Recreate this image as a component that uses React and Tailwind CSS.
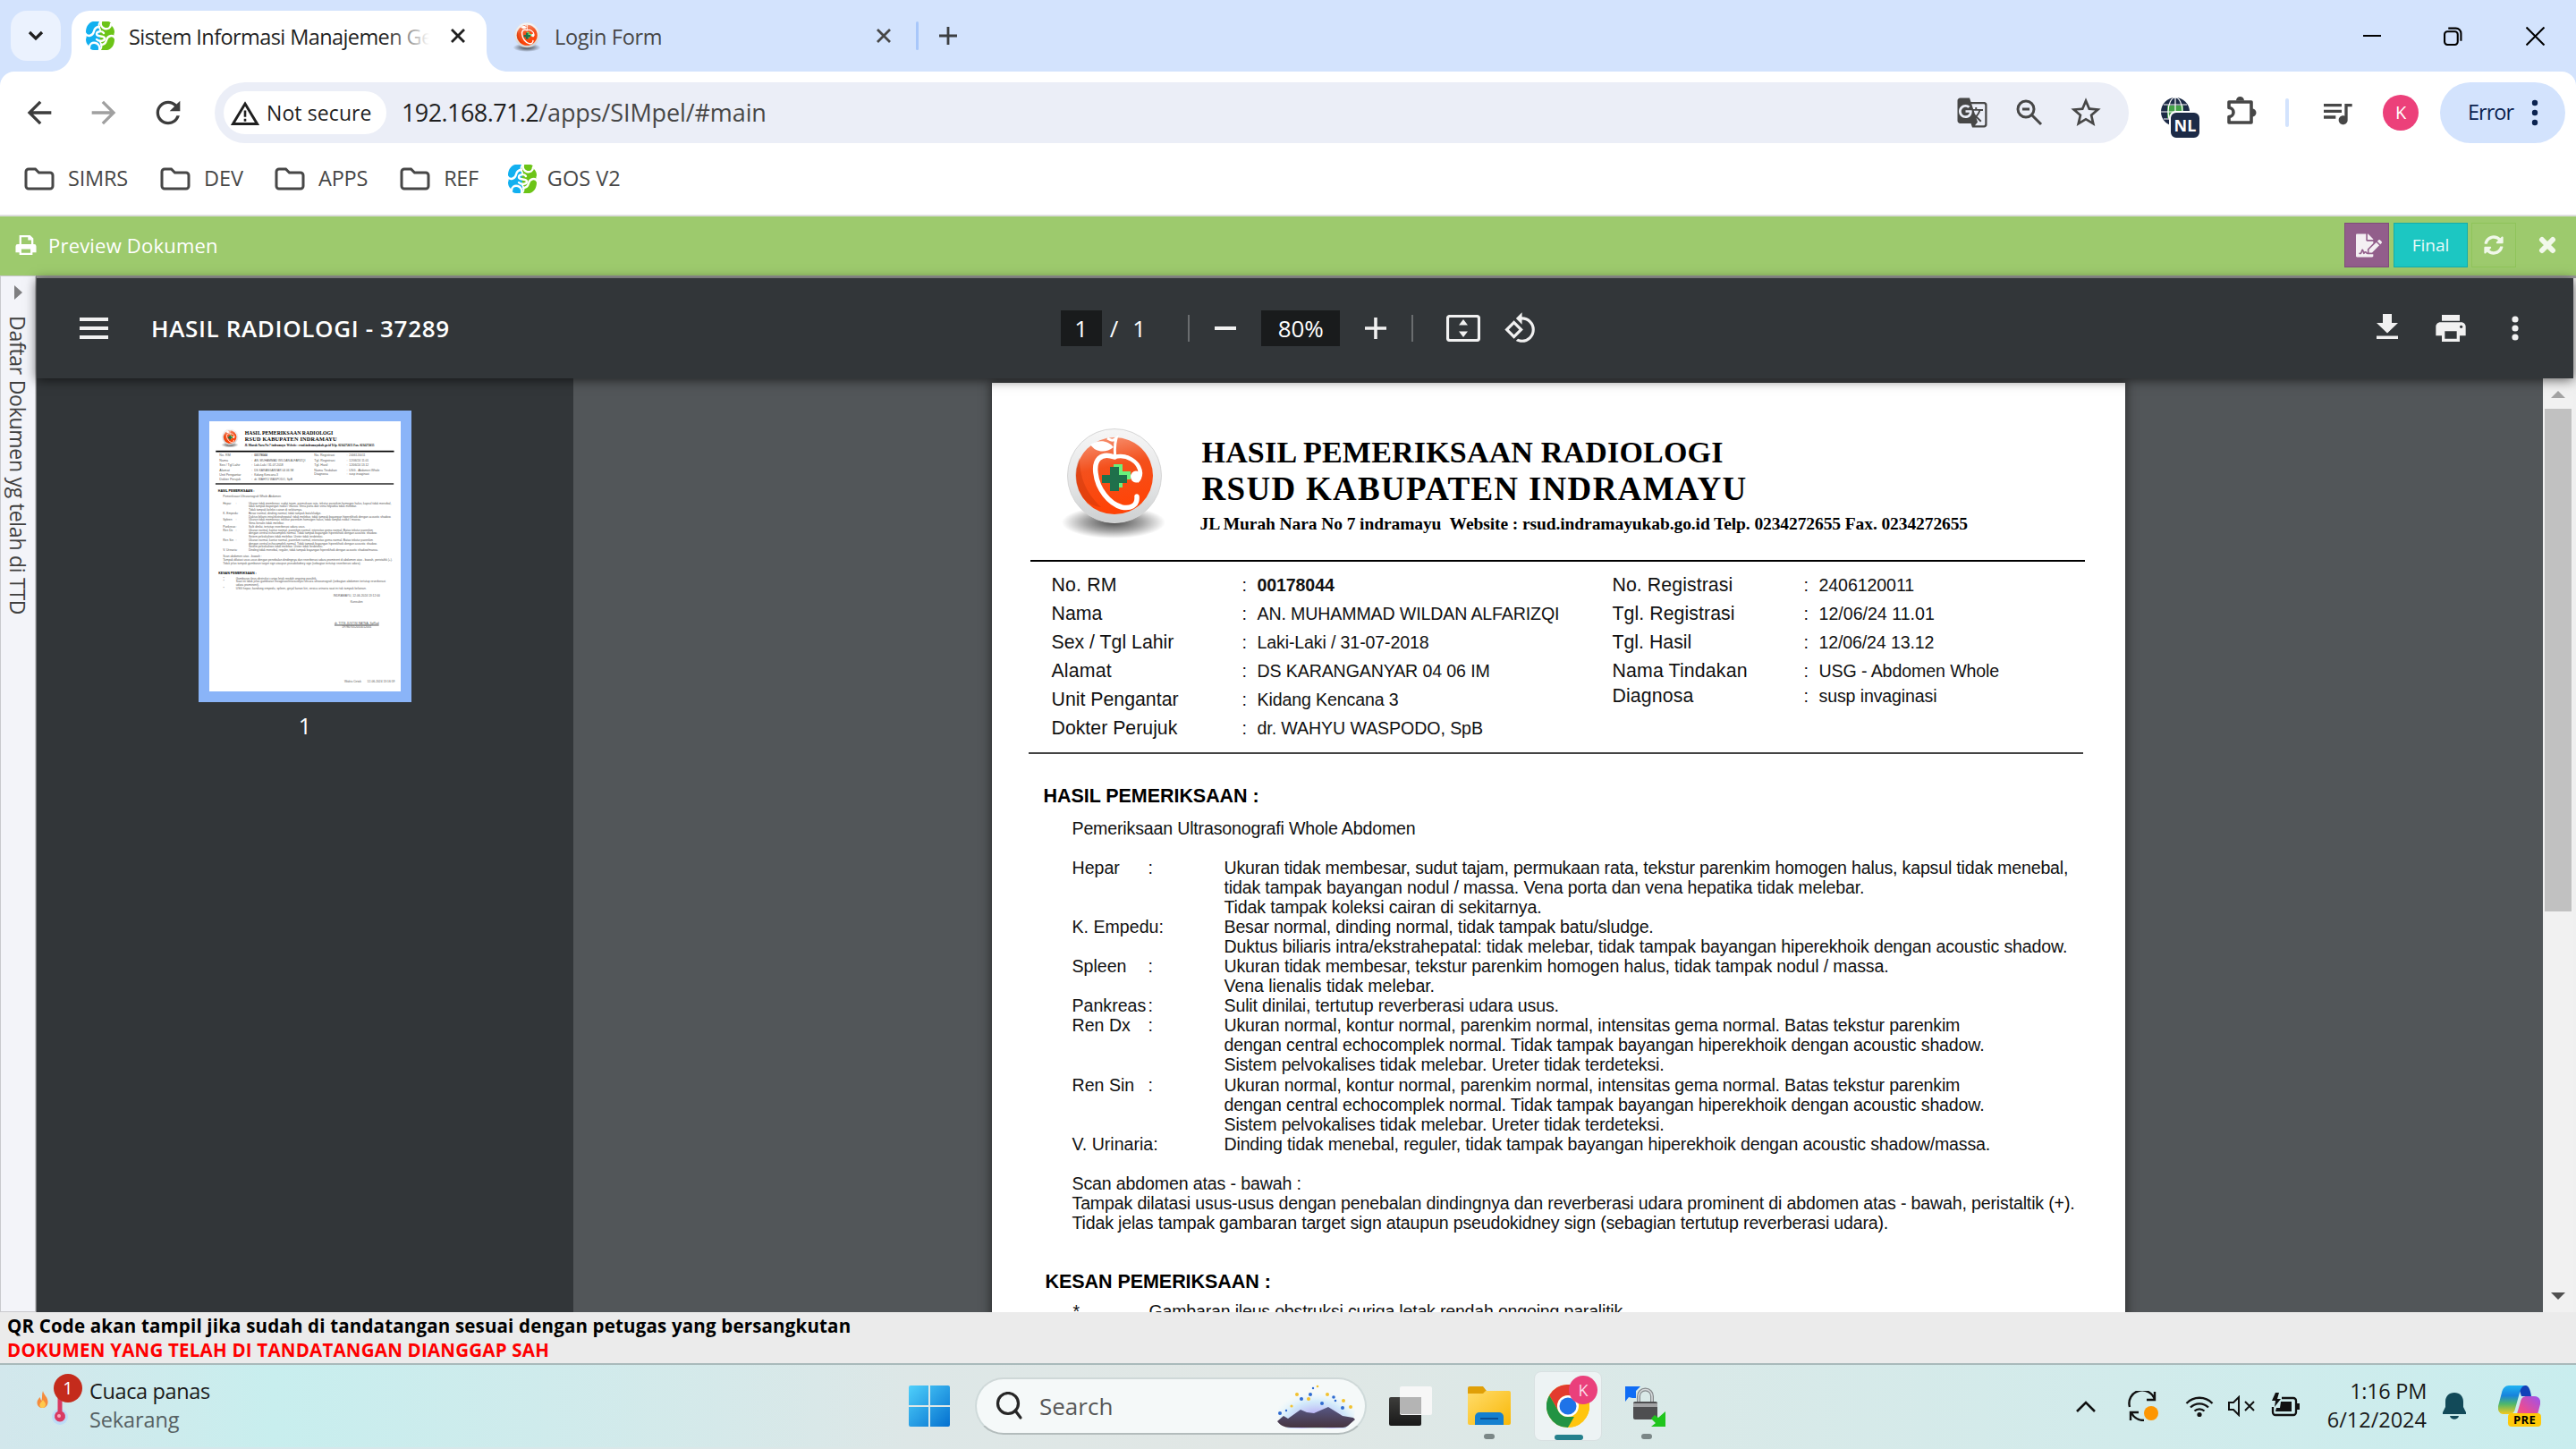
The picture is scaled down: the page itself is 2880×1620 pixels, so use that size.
import React, { useLayoutEffect, useRef, useState } from "react";
import {
  MdArrowBack,
  MdArrowForward,
  MdRefresh,
  MdGTranslate,
  MdStarBorder,
  MdQueueMusic,
  MdPrint,
  MdRotate90DegreesCcw,
} from "react-icons/md";
import { FaFileSignature, FaSyncAlt } from "react-icons/fa";

/* One line of text whose tracking is adjusted until it is `w` pixels long. */
function Fit({ w, vertical, className = "", children }) {
  const ref = useRef(null);
  const [spacing, setSpacing] = useState(0);
  useLayoutEffect(() => {
    const el = ref.current;
    const natural = vertical ? el.offsetHeight : el.offsetWidth;
    setSpacing((w - natural) / String(children).length);
  }, []);
  return (
    <span
      ref={ref}
      className={"inline-block shrink-0 whitespace-pre " + className}
      style={{ letterSpacing: spacing + "px" }}
    >
      {children}
    </span>
  );
}

function GosLogo({ className = "" }) {
  return (
    <svg viewBox="0 0 32 32" className={"size-8 shrink-0 " + className}>
      <path d="M8 0h7c-2 3-2 6 0 9l2 7-2 7c2 3 2 6 0 9H9c-3 0-5-2-6-5-2-2-3-4-3-7 1-3 1-5 0-8 0-6 3-11 8-12z" fill="#12b0f0" />
      <path d="M17 0h7c3 0 5 2 5 5 2 2 3 4 3 7-1 3-1 5 0 8 0 6-3 11-8 12h-7c2-3 2-6 0-9l-2-7 2-7c-2-3-2-6 0-9z" fill="#6cc417" />
      <g fill="none" stroke="#fff" strokeWidth="2.4" strokeLinecap="round">
        <path d="M-1 13c3 5 9 3 10-2 1-4 3-5 6-5" />
        <path d="M4 29c0-4 3-6 7-5 3 1 5 4 4 8" />
        <path d="M33 19c-3-5-9-3-10 2-1 4-3 5-6 5" />
        <path d="M28 3c0 4-3 6-7 5-3-1-5-4-4-8" />
        <path d="M20 13c-2-3-8-2-8 1 0 4 9 1 9 5 0 3-6 4-9 1" />
      </g>
    </svg>
  );
}

function HospitalLogo({ id, className = "" }) {
  return (
    <svg viewBox="0 0 120 132" className={"shrink-0 " + className}>
      <defs>
        <linearGradient id={id + "rim"} x1="0" y1="0" x2="0" y2="1">
          <stop offset="0" stopColor="#f6f6f6" />
          <stop offset=".6" stopColor="#e3e4e5" />
          <stop offset="1" stopColor="#cdd0d1" />
        </linearGradient>
        <linearGradient id={id + "red"} x1="0" y1="0" x2="0.2" y2="1">
          <stop offset="0" stopColor="#f79a7c" />
          <stop offset=".3" stopColor="#f4683c" />
          <stop offset=".45" stopColor="#f4501c" />
          <stop offset="1" stopColor="#ff4306" />
        </linearGradient>
        <radialGradient id={id + "sh"}>
          <stop offset="0" stopColor="#000" stopOpacity=".7" />
          <stop offset=".55" stopColor="#000" stopOpacity=".35" />
          <stop offset="1" stopColor="#000" stopOpacity="0" />
        </radialGradient>
      </defs>
      <ellipse cx="60" cy="106" rx="58" ry="18" fill={`url(#${id}sh)`} />
      <circle cx="61" cy="54" r="52.5" fill={`url(#${id}rim)`} stroke="#d6d6d6" strokeWidth="1" />
      <circle cx="61" cy="54" r="43" fill={`url(#${id}red)`} />
      <path d="M27 80a43 43 0 0 1-5-46c0 20 6 38 24 55-8-1-14-4-19-9z" fill="#b93209" opacity=".35" />
      <path d="M34 19c9-6 20-5 26 3-9 7-20 6-26-3z" fill="#fff" />
      <path d="M53 12c5 3 6 3 10 0-2 7-2 14-1 22" fill="none" stroke="#fff" strokeWidth="3" />
      <path
        d="M61 33C45 27 38 37 40 51c2 18 15 34 29 38 9 2 18-1 17-12"
        fill="none"
        stroke="#fff"
        strokeWidth="5.5"
        strokeLinecap="round"
      />
      <path d="M61 33c13-4 28 5 29 18 0 4-2 8-4 9" fill="none" stroke="#fff" strokeWidth="4.5" />
      <ellipse cx="85" cy="55" rx="6" ry="6.5" fill="#fff" />
      <path d="M60 41h10v8h9v9h-9v9h-10z" fill="#6af07c" />
      <path d="M56 44h10v9h9v9h-9v9H56v-9h-9v-9h9z" fill="#1f704b" />
    </svg>
  );
}

function CloseIcon({ className = "" }) {
  return (
    <svg viewBox="0 0 16 16" className={"size-4 shrink-0 " + className}>
      <path d="M1 1l14 14M15 1L1 15" stroke="currentColor" strokeWidth="2.8" />
    </svg>
  );
}

function TabStrip() {
  return (
    <div className="flex h-20 shrink-0 bg-[#d3e3fd] pl-3 text-[23.5px]">
      <div className="mt-3 flex size-14 items-center justify-center rounded-[18px] bg-[#ebf2fe]">
        <svg viewBox="0 0 18 12" className="h-3 w-[18px]">
          <path d="M2 2l7 7 7-7" fill="none" stroke="#1f1f1f" strokeWidth="3.2" />
        </svg>
      </div>
      <div className="relative mt-3 ml-3 h-[68px] w-[464px] rounded-t-[20px] bg-white">
        <svg viewBox="0 0 24 24" className="absolute bottom-0 -left-6 size-6">
          <path d="M24 0v24H0C14 24 24 14 24 0z" fill="#fff" />
        </svg>
        <svg viewBox="0 0 24 24" className="absolute -right-6 bottom-0 size-6">
          <path d="M0 0v24h24C10 24 0 14 0 0z" fill="#fff" />
        </svg>
        <div className="flex h-14 items-center pl-4 text-[#1f1f1f]">
          <GosLogo />
          <div className="relative ml-4 w-[336px] overflow-hidden pt-[3px]">
            <Fit w={340}>Sistem Informasi Manajemen Ge</Fit>
            <div className="absolute inset-y-0 right-0 w-12 bg-linear-to-r from-transparent to-white" />
          </div>
          <CloseIcon className="ml-6" />
        </div>
      </div>
      <div className="mt-3 flex h-14 items-center pl-[29px] text-[#474747]">
        <HospitalLogo id="tab" className="-mb-1 h-[37px] w-[32px]" />
        <Fit w={120} className="ml-[15px] pt-[3px]">Login Form</Fit>
        <CloseIcon className="ml-[240px]" />
        <div className="ml-7 h-8 w-[3px] rounded-full bg-[#a8c7fa]" />
        <svg viewBox="0 0 20 20" className="ml-[23px] size-5">
          <path d="M10 0v20M0 10h20" stroke="#3c3f42" strokeWidth="2.8" />
        </svg>
      </div>
      <div className="mr-[35px] ml-auto flex h-20 items-center">
        <svg viewBox="0 0 20 20" className="size-5"><path d="M0 10h20" stroke="#000" strokeWidth="2" /></svg>
        <svg viewBox="0 0 20 20" className="ml-[70px] size-[21px]" fill="none" stroke="#000" strokeWidth="2">
          <rect x="1" y="5" width="14" height="14" rx="3" />
          <path d="M5 1.5h8a5.5 5.5 0 0 1 5.5 5.5v8" />
        </svg>
        <svg viewBox="0 0 20 20" className="ml-[71px] size-[21px]">
          <path d="M.5.5l19 19M19.5.5l-19 19" stroke="#000" strokeWidth="2" />
        </svg>
      </div>
    </div>
  );
}

function AddressBar() {
  return (
    <div className="flex h-[92px] items-center pl-6 text-[#474747]">
      <MdArrowBack className="size-10 text-[#3c3c3c]" />
      <MdArrowForward className="ml-8 size-10 text-[#a0a0a0]" />
      <MdRefresh className="ml-8 size-10 text-[#3c3c3c]" />
      <div className="ml-8 flex h-[68px] w-[2140px] items-center rounded-full bg-[#ebeef7] pl-2.5">
        <div className="flex h-12 w-[182px] items-center rounded-full bg-white pl-2 text-[#1f1f1f]">
          <svg viewBox="0 0 30 26" className="h-[27px] w-8">
            <path d="M15 3L28 24.5H2z" fill="none" stroke="#1f1f1f" strokeWidth="2.8" />
            <path d="M15 10v7M15 19v3" stroke="#1f1f1f" strokeWidth="2.5" />
          </svg>
          <Fit w={118} className="ml-2 text-[23px] font-medium">Not secure</Fit>
        </div>
        <span className="ml-[17px] flex items-start text-[27px]">
          <Fit w={153} className="text-[#1f1f1f]">192.168.71.2</Fit>
          <Fit w={255}>/apps/SIMpel/#main</Fit>
        </span>
        <MdGTranslate className="ml-auto size-9" />
        <svg viewBox="0 0 30 30" className="ml-[31px] size-[30px]" fill="none" stroke="currentColor" strokeWidth="3">
          <circle cx="11" cy="11" r="9" />
          <path d="M7 11h8M17.5 17.5L28 28" />
        </svg>
        <MdStarBorder className="mr-7 ml-7 size-10" />
      </div>
      <div className="relative ml-[34px] size-9">
        <svg viewBox="0 0 36 36" className="-mt-px size-9">
          <circle cx="18" cy="18" r="16" fill="#1d2b47" />
          <path d="M9 11h18v14H9z" fill="#43a047" />
          <g fill="none" stroke="#fff" strokeWidth="1.2">
            <ellipse cx="18" cy="18" rx="8" ry="16" />
            <path d="M18 2v32M2 18h32M5 10h26M5 26h26" />
          </g>
        </svg>
        <div className="absolute top-4 left-[11px] flex h-[32px] w-[36px] items-center justify-center rounded-lg border-2 border-white bg-[#1d2b47] text-[18px] font-bold text-white">
          NL
        </div>
      </div>
      <svg viewBox="0 0 36 36" className="ml-[38px] size-9 -translate-y-0.5">
        <path
          d="M4 8h25v23H4v-6.5a5 5 0 0 0 0-10z"
          fill="none"
          stroke="currentColor"
          strokeWidth="3.6"
          strokeLinejoin="round"
        />
        <path d="M12 6.5a4.5 4.5 0 0 1 9 0zM30 15.5a4.5 4.5 0 0 1 0 9z" fill="currentColor" />
      </svg>
      <div className="ml-[31px] h-8 w-1 rounded-full bg-[#d3e3fd]" />
      <MdQueueMusic className="ml-[34px] size-10" />
      <div className="ml-[31px] flex size-10 items-center justify-center rounded-full bg-[#ec407a] text-[20px] text-white">K</div>
      <div className="ml-6 flex h-[68px] w-[140px] items-center rounded-full bg-[#d3e3fd] pl-[31px] text-[23.5px] text-[#0b2350]">
        <Fit w={51}>Error</Fit>
        <svg viewBox="0 0 8 30" className="ml-[20px] h-[30px] w-2" fill="#0b2350">
          <circle cx="4" cy="4" r="3.2" />
          <circle cx="4" cy="15" r="3.2" />
          <circle cx="4" cy="26" r="3.2" />
        </svg>
      </div>
    </div>
  );
}

const BOOKMARKS = [
  { label: "SIMRS", w: 67, ml: "" },
  { label: "DEV", w: 44, ml: "ml-9" },
  { label: "APPS", w: 55, ml: "ml-[35px]" },
  { label: "REF", w: 39, ml: "ml-[36px]" },
];

function Bookmarks() {
  return (
    <div className="flex h-[56px] items-center pl-[27px] text-[23.5px] text-[#474747]">
      {BOOKMARKS.map((b) => (
        <div key={b.label} className={"flex items-center " + b.ml}>
          <svg viewBox="0 0 34 26" className="mr-[15px] h-[26px] w-[34px]">
            <path
              d="M2 5a3 3 0 0 1 3-3h7.5l4 4H29a3 3 0 0 1 3 3v12a3 3 0 0 1-3 3H5a3 3 0 0 1-3-3z"
              fill="none"
              stroke="currentColor"
              strokeWidth="3"
            />
          </svg>
          <Fit w={b.w}>{b.label}</Fit>
        </div>
      ))}
      <GosLogo className="ml-[33px]" />
      <Fit w={82} className="ml-3">GOS V2</Fit>
    </div>
  );
}

function PreviewHeader() {
  return (
    <div className="flex h-[66px] shrink-0 items-center bg-[#9dca6d] pb-0.5 pl-[16px] text-white">
      <svg viewBox="0 0 26 26" className="mr-[12px] h-[24px] w-[26px]">
        <path
          fillRule="evenodd"
          d="M5 1h13l4 4v7h1a2.5 2.5 0 0 1 2.5 2.5V22H21v3H5v-3H.5v-7.5A2.5 2.5 0 0 1 3 12h2zM7.5 3.500V12h12V7h-4V3.500zM7.500 18v4.500h11V18z"
          fill="#fff"
        />
      </svg>
      <Fit w={190} className="text-[22px]">Preview Dokumen</Fit>
      <div className="ml-auto flex h-[50px] w-[50px] items-center justify-center border border-[#7f4d7a] bg-[#925e8b]">
        <FaFileSignature className="ml-1 size-[29px] text-[#f4eff3]" />
      </div>
      <div className="ml-[5px] flex h-[50px] w-[83px] items-center justify-center border border-[#15aba9] bg-[#1cc7c2]">
        <Fit w={42} className="text-[19px] text-[#e8faf9]">Final</Fit>
      </div>
      <div className="ml-1 flex size-[50px] items-center justify-center border border-[#8fc45a]">
        <FaSyncAlt className="size-[22px] text-[#f1f8ea]" />
      </div>
      <svg viewBox="0 0 20 20" className="mr-[22px] ml-[25px] size-5">
        <path d="M4 4l12 12M16 4L4 16" stroke="#f1f8ea" strokeWidth="6" strokeLinecap="round" />
      </svg>
    </div>
  );
}

function SideStrip() {
  return (
    <div className="flex w-10 shrink-0 flex-col items-center border border-[#c9c9cd] bg-[#f3f4f9]">
      <svg viewBox="0 0 9 16" className="mt-[10px] h-4 w-[9px]">
        <path d="M0 0l9 8-9 8z" fill="#7e7e80" />
      </svg>
      <Fit vertical w={334} className="mt-[18px] text-[23px] leading-[36px] text-[#404040] [writing-mode:vertical-rl]">
        Daftar Dokumen yg telah di TTD
      </Fit>
    </div>
  );
}

function PdfToolbar() {
  return (
    <div className="relative z-10 flex h-28 shrink-0 items-center bg-[#323639] pl-12 text-[26px] text-white shadow-[0_2px_12px_rgba(0,0,0,0.6)]">
      <div className="flex w-8 flex-col gap-[6px]">
        <div className="h-1 bg-[#f1f1f1]" />
        <div className="h-1 bg-[#f1f1f1]" />
        <div className="h-1 bg-[#f1f1f1]" />
      </div>
      <Fit w={334} className="ml-12 font-semibold">HASIL RADIOLOGI - 37289</Fit>
      <div className="ml-[683px] flex h-10 w-[46px] items-center justify-center bg-[#191b1c]">1</div>
      <span className="ml-[9px]">/</span>
      <span className="ml-[16px] w-[16px]">1</span>
      <div className="ml-[46px] h-[30px] w-0.5 bg-[#6a6d6f]" />
      <div className="ml-7 h-[4px] w-6 bg-[#f1f1f1]" />
      <div className="ml-7 flex h-10 w-[88px] items-center justify-center bg-[#191b1c]">
        <Fit w={51}>80%</Fit>
      </div>
      <svg viewBox="0 0 24 24" className="ml-7 size-6">
        <path d="M12 0v24M0 12h24" stroke="#f1f1f1" strokeWidth="3.6" />
      </svg>
      <div className="ml-7 h-[30px] w-0.5 bg-[#6a6d6f]" />
      <svg viewBox="0 0 38 30" className="ml-[37px] h-[30px] w-[38px]">
        <rect x="1.5" y="1.5" width="35" height="27" rx="2.5" fill="none" stroke="#f1f1f1" strokeWidth="3.2" />
        <path d="M19 5l5 6.5H14zM19 25l5-6.500H14z" fill="#f1f1f1" />
      </svg>
      <MdRotate90DegreesCcw className="ml-[26px] size-[38px] text-[#f1f1f1]" />
      <svg viewBox="0 0 24 28" className="ml-auto -mt-1 h-[28px] w-6" fill="#f1f1f1">
        <path d="M7 0h10v10h7L12 21.5 0 10h7zM0 24.500h24V28H0z" />
      </svg>
      <MdPrint className="ml-[39px] size-[40px] text-[#f1f1f1]" />
      <svg viewBox="0 0 8 28" className="mr-[61px] ml-[48px] h-[28px] w-2" fill="#f1f1f1">
        <circle cx="4" cy="4" r="3.6" />
        <circle cx="4" cy="14" r="3.6" />
        <circle cx="4" cy="24" r="3.6" />
      </svg>
    </div>
  );
}

const LEFT_INFO = [
  ["No. RM", 73, "00178044", 86],
  ["Nama", 57, "AN. MUHAMMAD WILDAN ALFARIZQI", 338],
  ["Sex / Tgl Lahir", 137, "Laki-Laki / 31-07-2018", 192],
  ["Alamat", 67, "DS KARANGANYAR 04 06 IM", 260],
  ["Unit Pengantar", 142, "Kidang Kencana 3", 158],
  ["Dokter Perujuk", 141, "dr. WAHYU WASPODO, SpB", 252],
];

const RIGHT_INFO = [
  ["No. Registrasi", 135, "2406120011", 107],
  ["Tgl. Registrasi", 137, "12/06/24 11.01", 129],
  ["Tgl. Hasil", 89, "12/06/24 13.12", 129],
  ["Nama Tindakan", 151, "USG - Abdomen Whole", 202],
  ["Diagnosa", 91, "susp invaginasi", 132],
];

const ECHO = [
  ["Ukuran normal, kontur normal, parenkim normal, intensitas gema normal. Batas tekstur parenkim", 823],
  ["dengan central echocomplek normal. Tidak tampak bayangan hiperekhoik dengan acoustic shadow.", 850],
  ["Sistem pelvokalises tidak melebar. Ureter tidak terdeteksi.", 492],
];

const FINDINGS = [
  ["Hepar", ":", [
    ["Ukuran tidak membesar, sudut tajam, permukaan rata, tekstur parenkim homogen halus, kapsul tidak menebal,", 944],
    ["tidak tampak bayangan nodul / massa. Vena porta dan vena hepatika tidak melebar.", 716],
    ["Tidak tampak koleksi cairan di sekitarnya.", 355],
  ]],
  ["K. Empedu:", "", [
    ["Besar normal, dinding normal, tidak tampak batu/sludge.", 480],
    ["Duktus biliaris intra/ekstrahepatal: tidak melebar, tidak tampak bayangan hiperekhoik dengan acoustic shadow.", 943],
  ]],
  ["Spleen", ":", [
    ["Ukuran tidak membesar, tekstur parenkim homogen halus, tidak tampak nodul / massa.", 743],
    ["Vena lienalis tidak melebar.", 235],
  ]],
  ["Pankreas", ":", [["Sulit dinilai, tertutup reverberasi udara usus.", 374]]],
  ["Ren Dx", ":", ECHO],
  ["Ren Sin", ":", ECHO],
  ["V. Urinaria:", "", [
    ["Dinding tidak menebal, reguler, tidak tampak bayangan hiperekhoik dengan acoustic shadow/massa.", 857],
  ]],
];

function InfoRow({ row, tight, wide, bold }) {
  return (
    <div className={"flex items-center " + (tight ? "h-6" : "h-8")}>
      <div className={"shrink-0 text-[21.3px] " + (wide ? "w-[214px]" : "w-[213px]")}>
        <Fit w={row[1]}>{row[0]}</Fit>
      </div>
      <span className="w-[17px] shrink-0">:</span>
      <Fit w={row[3]} className={bold ? "font-bold" : ""}>{row[2]}</Fit>
    </div>
  );
}

function Report({ id, thumb }) {
  return (
    <div
      className={
        "flex h-[1787px] w-[1267px] shrink-0 flex-col bg-white font-['Liberation_Sans',Arial,sans-serif] text-[19.6px] " +
        (thumb ? "text-[#555]" : "text-[#111]")
      }
    >
      <div className="flex h-[198px] pt-[50px] pl-[76px] font-['Liberation_Serif','Times_New_Roman',serif] font-bold text-black">
        <HospitalLogo id={id} className="h-[132px] w-[120px]" />
        <div className="flex flex-col items-start pt-[7px] pl-[37px]">
          <Fit w={583} className="ml-[2px] h-[42px] text-[34px] leading-[42px]">HASIL PEMERIKSAAN RADIOLOGI</Fit>
          <Fit w={610} className="ml-[2px] h-10 text-[37px] leading-[40px]">RSUD KABUPATEN INDRAMAYU</Fit>
          <Fit w={859} className="h-[38px] text-[19.5px] leading-[38px]">
            {"JL Murah Nara No 7 indramayu  Website : rsud.indramayukab.go.id Telp. 0234272655 Fax. 0234272655"}
          </Fit>
        </div>
      </div>
      <div className={"ml-[43px] w-[1179px] shrink-0 bg-black " + (thumb ? "-my-1 h-2.5" : "h-0.5")} />
      <div className="mt-[11px] flex h-48 shrink-0 pl-[67px]">
        <div className="w-[627px]">
          {LEFT_INFO.map((r, i) => (
            <InfoRow key={r[0]} row={r} bold={i === 0} />
          ))}
        </div>
        <div>
          {RIGHT_INFO.map((r, i) => (
            <InfoRow key={r[0]} row={r} tight={i === 4} wide />
          ))}
        </div>
      </div>
      <div className={"ml-[41px] w-[1179px] shrink-0 bg-[#444] " + (thumb ? "mt-1.5 -mb-1 h-2.5" : "mt-[10px] h-0.5")} />
      <Fit w={241} className="mt-[33px] ml-[58px] h-7 self-start text-[21.5px] leading-[28px] font-bold text-black">HASIL PEMERIKSAAN :</Fit>
      <div className="mt-[11px] pl-[90px] leading-[22.06px]">
        <div className="mb-[22px] h-[22px]"><Fit w={384}>Pemeriksaan Ultrasonografi Whole Abdomen</Fit></div>
        {FINDINGS.map(([label, colon, lines]) => (
          <div key={label} className="flex">
            <div className="relative w-[170px] shrink-0">
              {label}
              <span className="absolute left-[85px]">{colon}</span>
            </div>
            <div className="flex flex-col">
              {lines.map(([t, w]) => (
                <Fit key={t} w={w} className="h-[22.06px] self-start">{t}</Fit>
              ))}
            </div>
          </div>
        ))}
        <div className="mt-[22px] flex flex-col items-start">
          <Fit w={256}>Scan abdomen atas - bawah :</Fit>
          <Fit w={1121}>Tampak dilatasi usus-usus dengan penebalan dindingnya dan reverberasi udara prominent di abdomen atas - bawah, peristaltik (+).</Fit>
          <Fit w={913}>Tidak jelas tampak gambaran target sign ataupun pseudokidney sign (sebagian tertutup reverberasi udara).</Fit>
        </div>
      </div>
      <Fit w={252} className="mt-[41px] ml-[60px] h-7 self-start text-[21.5px] leading-[28px] font-bold text-black">KESAN PEMERIKSAAN :</Fit>
      <div className="mt-[8px] grid grid-cols-[85px_1fr] pr-24 pl-[91px] leading-[22px]">
        <span>*</span>
        <Fit w={535} className="justify-self-start">Gambaran ileus obstruksi curiga letak rendah ongoing paralitik.</Fit>
        <span>*</span>
        <span>Saat ini tidak jelas gambaran invaginasi/intususepsi secara ultrasonografi (sebagian abdomen tertutup reverberasi udara prominent).</span>
        <span>*</span>
        <span>USG hepar, kandung empedu, spleen, ginjal kanan kiri, vesica urinaria saat ini tak tampak kelainan.</span>
      </div>
      <div className="mt-[28px] mr-[137px] flex w-[310px] flex-col items-center self-end leading-[22px]">
        <span>INDRAMAYU, 12-06-2024 13:12:00</span>
        <span className="mt-5">Konsulen</span>
        <span className="mt-[118px] border-b-4 border-black">dr. TITIS JUSTISI RATNA, SpRad</span>
        <span>197807052010012001</span>
      </div>
      <div className="mt-auto mb-[54px] flex gap-10 self-end pr-10 leading-[22px]">
        <span>Waktu Cetak</span>
        <span>12-06-2024 13:16:59</span>
      </div>
    </div>
  );
}

function PdfViewer() {
  return (
    <div className="flex w-[2836px] shrink-0 flex-col">
      <PdfToolbar />
      <div className="flex min-h-0 flex-1">
        <div className="flex w-[600px] shrink-0 flex-col items-center bg-[#323639] pt-9">
          <div className="flex h-[326px] w-[238px] items-center justify-center bg-[#8ab4f8]">
            <div className="h-[302px] w-[214px] overflow-hidden bg-white">
              <div className="origin-top-left scale-[0.169]"><Report id="thumb" thumb /></div>
            </div>
          </div>
          <span className="mt-2 text-[25px] leading-[36px] text-white">1</span>
        </div>
        <div className="flex min-w-0 flex-1 items-start justify-center overflow-hidden bg-[#525659] pt-[5px]">
          <div className="shadow-[0_0_10px_2px_rgba(35,35,35,0.75)]"><Report id="page" /></div>
        </div>
        <div className="flex w-[34px] shrink-0 flex-col items-center bg-[#f1f1f1]">
          <svg viewBox="0 0 16 8" className="mt-[14px] h-2 w-4"><path d="M0 8l8-8 8 8z" fill="#a3a3a3" /></svg>
          <div className="mt-3 h-[562px] w-[30px] bg-[#c1c1c1]" />
          <svg viewBox="0 0 16 8" className="mt-auto mb-[14px] h-2 w-4"><path d="M0 0l8 8 8-8z" fill="#505050" /></svg>
        </div>
      </div>
    </div>
  );
}

function SearchArt() {
  return (
    <svg viewBox="0 0 90 50" className="h-[50px] w-[90px]">
      <defs>
        <radialGradient id="glow" cx=".5" cy=".75" r=".6">
          <stop offset="0" stopColor="#c6e9c9" />
          <stop offset=".35" stopColor="#bcb6f5" />
          <stop offset=".7" stopColor="#c9e6fb" stopOpacity=".8" />
          <stop offset="1" stopColor="#e8f8fd" stopOpacity="0" />
        </radialGradient>
        <linearGradient id="mount" x1="0" y1="0" x2="0" y2="1">
          <stop offset="0" stopColor="#565784" />
          <stop offset="1" stopColor="#46343f" />
        </linearGradient>
      </defs>
      <ellipse cx="46" cy="30" rx="43" ry="30" fill="url(#glow)" />
      <path d="M2 42l7-6 5 3 14-10 7 3 8 1 16-7 16 10 12 2 2 2-8 7c-3 2-5 2-8 2H17c-8 0-12-3-15-7z" fill="url(#mount)" />
      <g fill="#f2c230">
        <circle cx="24" cy="12" r="2" /><circle cx="37" cy="17" r="2" /><circle cx="47" cy="3" r="1.3" />
        <circle cx="58" cy="12" r="2" /><circle cx="76" cy="19" r="2" /><circle cx="84" cy="26" r="2" /><circle cx="18" cy="25" r="1.6" />
      </g>
      <g fill="#2f6bd0">
        <circle cx="39" cy="12" r="2" /><circle cx="29" cy="17" r="2" /><circle cx="52" cy="22" r="2" />
        <circle cx="65" cy="15" r="1.8" /><circle cx="75" cy="27" r="2" /><circle cx="5" cy="33" r="2" /><circle cx="12" cy="30" r="1.2" />
        <circle cx="42" cy="5" r="1.2" /><circle cx="67" cy="19" r="1.3" />
      </g>
    </svg>
  );
}

function Taskbar() {
  return (
    <div className="flex h-24 shrink-0 items-center border-t-2 border-[#a9babb] bg-linear-to-r from-[#d2e7ec] via-[#e1e7e5] via-48% to-[#c9edee] pb-0.5 text-[23.5px] text-[#1a1a1a]">
      <div className="flex h-full w-[1016px] items-center bg-linear-to-r from-transparent via-[#c8eeee] via-30% to-transparent pb-0.5 pl-[40px]">
        <div className="relative h-16 w-[60px] shrink-0">
          <svg viewBox="0 0 40 42" className="mt-[13px] h-[42px] w-10">
            <path d="M8 3c1 5 6 7 5.500 13-.5 4-3 6-6 6s-6-2-6-6c0-3 2-4 3-6 1 2 1 3 2 4 1-4 0-7 1.500-11z" fill="#f58b3c" />
            <path d="M8 13c1 2 3 3 3 5s-1 4-3.500 4S4 20 4.500 18 7 15 8 13z" fill="#ffc94d" />
            <circle cx="27" cy="32" r="9" fill="#bcdcf8" />
            <path d="M24.500 4h5v22a6 6 0 1 1-5 0z" fill="#d93a63" />
            <circle cx="26" cy="31" r="2" fill="#f9aac0" />
          </svg>
          <div className="absolute -top-[3px] left-[20px] flex size-8 items-center justify-center rounded-full bg-[#c42b1c] text-[20px] text-white">1</div>
        </div>
        <div className="flex flex-col items-start leading-[32px]">
          <Fit w={135}>Cuaca panas</Fit>
          <Fit w={100} className="text-[#566163]">Sekarang</Fit>
        </div>
      </div>
      <svg viewBox="0 0 46 46" className="size-[46px] shrink-0">
        <defs>
          <linearGradient id="win" x1="0" y1="0" x2="1" y2="1">
            <stop offset="0" stopColor="#4fd0fb" />
            <stop offset="1" stopColor="#0470cf" />
          </linearGradient>
        </defs>
        <path d="M2 0h20v22H0V2a2 2 0 0 1 2-2zM24 0h20a2 2 0 0 1 2 2v20H24zM0 24h22v22H2a2 2 0 0 1-2-2zM24 24h22v20a2 2 0 0 1-2 2H24z" fill="url(#win)" />
      </svg>
      <div className="ml-7 flex h-[64px] w-[438px] shrink-0 items-center rounded-full border-2 border-x-[#cfdada] border-t-[#cfd8d8] border-b-[#b3bcbc] bg-[#f5f9f9] pl-[20px]">
        <svg viewBox="0 0 32 32" className="size-8" fill="none" stroke="#262626" strokeWidth="3.2" strokeLinecap="round">
          <circle cx="15" cy="13" r="11.5" />
          <path d="M23 21l6 8" />
        </svg>
        <Fit w={82} className="ml-[18px] text-[26px] text-[#575757]">Search</Fit>
        <div className="ml-[182px]"><SearchArt /></div>
      </div>
      <svg viewBox="0 0 48 46" className="ml-[25px] h-[46px] w-12 shrink-0">
        <defs>
          <linearGradient id="tv" x1="0" y1="0" x2="0" y2="1">
            <stop offset="0" stopColor="#3d3d3b" />
            <stop offset="1" stopColor="#191919" />
          </linearGradient>
        </defs>
        <rect x="0" y="13" width="36" height="32" rx="2" fill="url(#tv)" />
        <rect x="12" y="1" width="36" height="32" rx="2" fill="#f7f7f7" />
        <path d="M12 13h24v19H14a2 2 0 0 1-2-2z" fill="#b4b4b4" />
      </svg>
      <div className="relative ml-10 shrink-0">
        <svg viewBox="0 0 48 44" className="h-11 w-12">
          <defs>
            <linearGradient id="fold" x1="0" y1="0" x2="1" y2="1">
              <stop offset="0" stopColor="#ffdc6c" />
              <stop offset="1" stopColor="#f9b807" />
            </linearGradient>
          </defs>
          <path d="M0 2a2 2 0 0 1 2-2h15l4 5v6H0z" fill="#e09f07" />
          <path d="M0 8h17l3-3h26a2 2 0 0 1 2 2v34a2 2 0 0 1-2 2H2a2 2 0 0 1-2-2z" fill="url(#fold)" />
          <path d="M8 43V34a5 5 0 0 1 5-5h22a5 5 0 0 1 5 5v9z" fill="#1580cf" />
          <path d="M14 36h20" stroke="#0b4f93" strokeWidth="2" />
        </svg>
        <div className="absolute -bottom-[15px] left-[18px] h-1.5 w-3 rounded-full bg-[#7b8787]" />
      </div>
      <div className="relative ml-[26px] flex h-[78px] w-[76px] shrink-0 items-center justify-center rounded-lg border border-[#d9e1e2] bg-[#edf3f4]">
        <svg viewBox="0 0 48 48" className="size-12">
          <circle cx="24" cy="24" r="24" fill="#ffc50f" />
          <path d="M3.2 12A24 24 0 0 1 44.8 12H24a12 12 0 0 0-10.4 18z" fill="#e33b2e" />
          <path d="M3.2 12l10.4 18A12 12 0 0 0 24 36h10.4L24 48A24 24 0 0 1 3.2 12z" fill="#229343" />
          <path d="M34.4 30L24 48A24 24 0 0 0 44.8 12H24z" fill="#ffc50f" />
          <circle cx="24" cy="24" r="12" fill="#fff" />
          <circle cx="24" cy="24" r="9.5" fill="#1f73e8" />
        </svg>
        <div className="absolute top-[4px] right-[4px] flex size-8 items-center justify-center rounded-full bg-[#ea407b] text-[18px] text-[#fbdde8]">K</div>
        <div className="absolute bottom-0 left-[22px] h-1.5 w-8 rounded-full bg-[#25808c]" />
      </div>
      <div className="relative ml-[26px] shrink-0">
        <svg viewBox="0 0 46 48" className="h-12 w-[46px]">
          <path d="M0 2h17l-5 5v8h-4l-4-1-4 5z" fill="#0f6cf5" />
          <path d="M15 22v-9a7 7 0 0 1 15 0v9" fill="none" stroke="#85898c" strokeWidth="4" />
          <path d="M15 22v-9a7 7 0 0 1 15 0v9" fill="none" stroke="#d7dadc" strokeWidth="1.5" />
          <rect x="9" y="19" width="27" height="20" rx="2" fill="#4e4e50" />
          <path d="M9 21h27v4H9z" fill="#a3a3a5" />
          <path d="M45 30v17H29l5-4-5-5 4-4 4 3z" fill="#1fc51c" />
        </svg>
        <div className="absolute -bottom-[13px] left-[18px] h-1.5 w-3 rounded-full bg-[#7b8787]" />
      </div>
      <div className="mr-10 ml-auto flex shrink-0 items-center">
        <svg viewBox="0 0 22 13" className="h-[13px] w-[22px]"><path d="M1 12L11 2l10 10" fill="none" stroke="#111" strokeWidth="2.6" /></svg>
        <svg viewBox="0 0 34 34" className="ml-[36px] size-[34px]" fill="none" stroke="#111" strokeWidth="2.4">
          <path d="M2 18a14.5 14.5 0 0 1 28-8M30 1v9h-9M3 33v-9h9M4 25c3 5 8 8 14 8" />
          <circle cx="26" cy="25" r="8" fill="#fd9602" stroke="none" />
        </svg>
        <svg viewBox="0 0 32 26" className="ml-[30px] h-[26px] w-8" fill="none" stroke="#111" strokeWidth="2.3">
          <path d="M1.5 10a20 20 0 0 1 29 0M6 14.5a14 14 0 0 1 20 0M10.5 18.5a8 8 0 0 1 11 0" />
          <circle cx="16" cy="22.5" r="2.6" fill="#111" stroke="none" />
        </svg>
        <svg viewBox="0 0 32 24" className="ml-[15px] h-6 w-8" fill="none" stroke="#111" strokeWidth="2">
          <path d="M2 8h5l6-6v20l-6-6H2zM20 7l10 10M30 7L20 17" />
        </svg>
        <svg viewBox="0 0 34 28" className="mb-1 ml-[17px] h-7 w-[34px]">
          <path d="M12 7h13a3 3 0 0 1 3 3v13a3 3 0 0 1-3 3H5a3 3 0 0 1-3-3v-6" fill="none" stroke="#111" strokeWidth="2.3" />
          <path d="M11 11h12v11H5l1-4h4zM29 13h3v7h-3zM5 1l-4 9h4l-1 7 7-9H7l2-7z" fill="#111" />
        </svg>
        <div className="ml-[30px] flex w-[110px] flex-col items-end pb-0.5 leading-[32px]">
          <Fit w={86}>1:16 PM</Fit>
          <Fit w={111}>6/12/2024</Fit>
        </div>
        <svg viewBox="0 0 26 30" className="ml-[18px] h-[30px] w-[26px]" fill="#124a59">
          <path d="M13 0c6 0 10 4 10 10v6l3 6v2H0v-2l3-6v-6C3 4 7 0 13 0zM8 26h10c-1 5-9 5-10 0z" />
        </svg>
        <div className="relative ml-9 h-[46px] w-[47px]">
          <svg viewBox="0 0 47 46" className="size-full">
            <defs>
              <linearGradient id="cpa" x1="0" y1="0" x2="0" y2="1">
                <stop offset="0" stopColor="#1fb3f2" />
                <stop offset=".35" stopColor="#1783dd" />
                <stop offset=".65" stopColor="#4fb86a" />
                <stop offset="1" stopColor="#f4c81f" />
              </linearGradient>
              <linearGradient id="cpb" x1="1" y1="0" x2="0" y2="1">
                <stop offset="0" stopColor="#9b52ee" />
                <stop offset=".5" stopColor="#ea4d93" />
                <stop offset="1" stopColor="#fb7d4e" />
              </linearGradient>
            </defs>
            <path d="M22 0h9c3 0 5 5 6 12H26z" fill="#1241b8" />
            <path d="M12 0h18c-4 1-5 4-6 8l-5 18c-1 4-3 6-7 6H7c-5 0-8-3-7-9l4-15c1-5 4-8 8-8z" fill="url(#cpa)" />
            <path d="M32 12h8c5 0 8 3 7 9l-4 15c-1 4-4 6-8 6H10c6 0 9-3 10-7l5-17c1-4 3-6 7-6z" fill="url(#cpb)" />
          </svg>
          <div className="absolute -right-px bottom-0 flex h-[15px] w-[37px] items-center justify-center rounded bg-[#ffc90a] text-[13px] font-bold tracking-wide text-black">PRE</div>
        </div>
      </div>
    </div>
  );
}

export default function App() {
  return (
    <div className="flex h-[1620px] w-[2880px] flex-col overflow-hidden bg-[#ebebeb] font-['Open_Sans','Noto_Sans',sans-serif]">
      <TabStrip />
      <div className="bg-[#d3e3fd]">
        <div className="h-[162px] rounded-t-2xl border-b-2 border-[#dedede] bg-white">
          <AddressBar />
          <Bookmarks />
        </div>
      </div>
      <PreviewHeader />
      <div className="flex h-[1159px] shrink-0">
        <SideStrip />
        <div className="flex flex-1 border-t-[3px] border-l border-t-[#9a9a9a] border-l-[#77797b] bg-[#f0f0f0]">
          <PdfViewer />
        </div>
      </div>
      <div className="flex h-[57px] shrink-0 flex-col items-start bg-[#ebebeb] pt-0.5 pl-2 text-[20.5px] leading-[27px] font-bold">
        <Fit w={943} className="text-black">QR Code akan tampil jika sudah di tandatangan sesuai dengan petugas yang bersangkutan</Fit>
        <Fit w={606} className="text-[#fe0000]">DOKUMEN YANG TELAH DI TANDATANGAN DIANGGAP SAH</Fit>
      </div>
      <Taskbar />
    </div>
  );
}
